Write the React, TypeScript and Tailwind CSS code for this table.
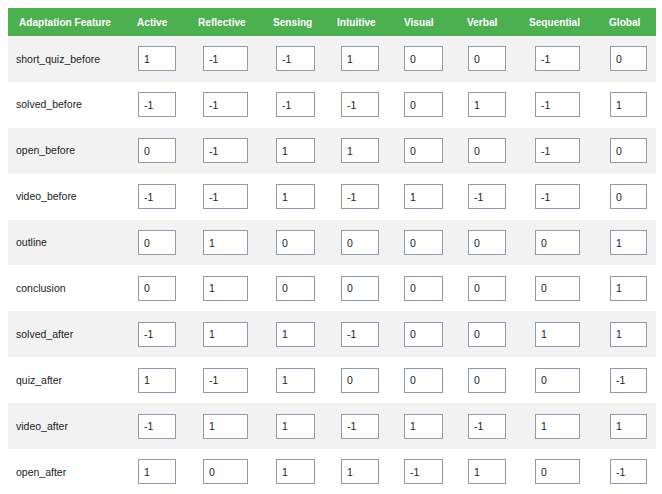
import React from "react";

const cols = [
  { label: "Active", head: "pl-[7px]", input: "w-[38px]" },
  { label: "Reflective", head: "pl-[3px]", input: "w-[45px]" },
  { label: "Sensing", head: "pl-[5px]", input: "w-[39px]" },
  { label: "Intuitive", head: "pl-[4px]", input: "w-[38px]" },
  { label: "Visual", head: "pl-[8px]", input: "w-[39px]" },
  { label: "Verbal", head: "pl-[7px]", input: "w-[38px]" },
  { label: "Sequential", head: "pl-[2px]", input: "w-[45px]" },
  { label: "Global", head: "pl-[7px]", input: "w-[37px]" },
];

const rows: [string, string[]][] = [
  ["short_quiz_before", ["1", "-1", "-1", "1", "0", "0", "-1", "0"]],
  ["solved_before", ["-1", "-1", "-1", "-1", "0", "1", "-1", "1"]],
  ["open_before", ["0", "-1", "1", "1", "0", "0", "-1", "0"]],
  ["video_before", ["-1", "-1", "1", "-1", "1", "-1", "-1", "0"]],
  ["outline", ["0", "1", "0", "0", "0", "0", "0", "1"]],
  ["conclusion", ["0", "1", "0", "0", "0", "0", "0", "1"]],
  ["solved_after", ["-1", "1", "1", "-1", "0", "0", "1", "1"]],
  ["quiz_after", ["1", "-1", "1", "0", "0", "0", "0", "-1"]],
  ["video_after", ["-1", "1", "1", "-1", "1", "-1", "1", "1"]],
  ["open_after", ["1", "0", "1", "1", "-1", "1", "0", "-1"]],
];

const gridCols = "grid grid-cols-[122px_65px_73px_65px_63px_64px_67px_75px_54px]";

export default function App() {
  return (
    <div className="bg-white w-[662px] h-[494px] overflow-hidden p-2 font-['Liberation_Sans',Arial,sans-serif]">
      <div className="w-[648px]">
        <div className={`${gridCols} h-[28px] bg-[#4caf50] items-center text-white font-bold text-[10.1px]`}>
          <div className="pl-[11px] pt-[1px]">Adaptation Feature</div>
          {cols.map((c) => (
            <div key={c.label} className={`${c.head} pt-[1px]`}>
              {c.label}
            </div>
          ))}
        </div>
        {rows.map(([name, vals], r) => (
          <div
            key={name}
            className={`${gridCols} h-[45.9px] items-center text-[10.5px] text-[#222] ${r % 2 === 0 ? "bg-[#f2f2f2]" : "bg-white"}`}
          >
            <div className="pl-2 pt-[1px]">{name}</div>
            {vals.map((v, i) => (
              <div key={i} className="pl-2">
                <input
                  readOnly
                  value={v}
                  className={`${cols[i].input} h-[25px] border border-[#8f9bab] bg-white px-[5px] text-[10.5px] text-[#222] outline-none font-['Liberation_Sans',Arial,sans-serif]`}
                />
              </div>
            ))}
          </div>
        ))}
      </div>
    </div>
  );
}
